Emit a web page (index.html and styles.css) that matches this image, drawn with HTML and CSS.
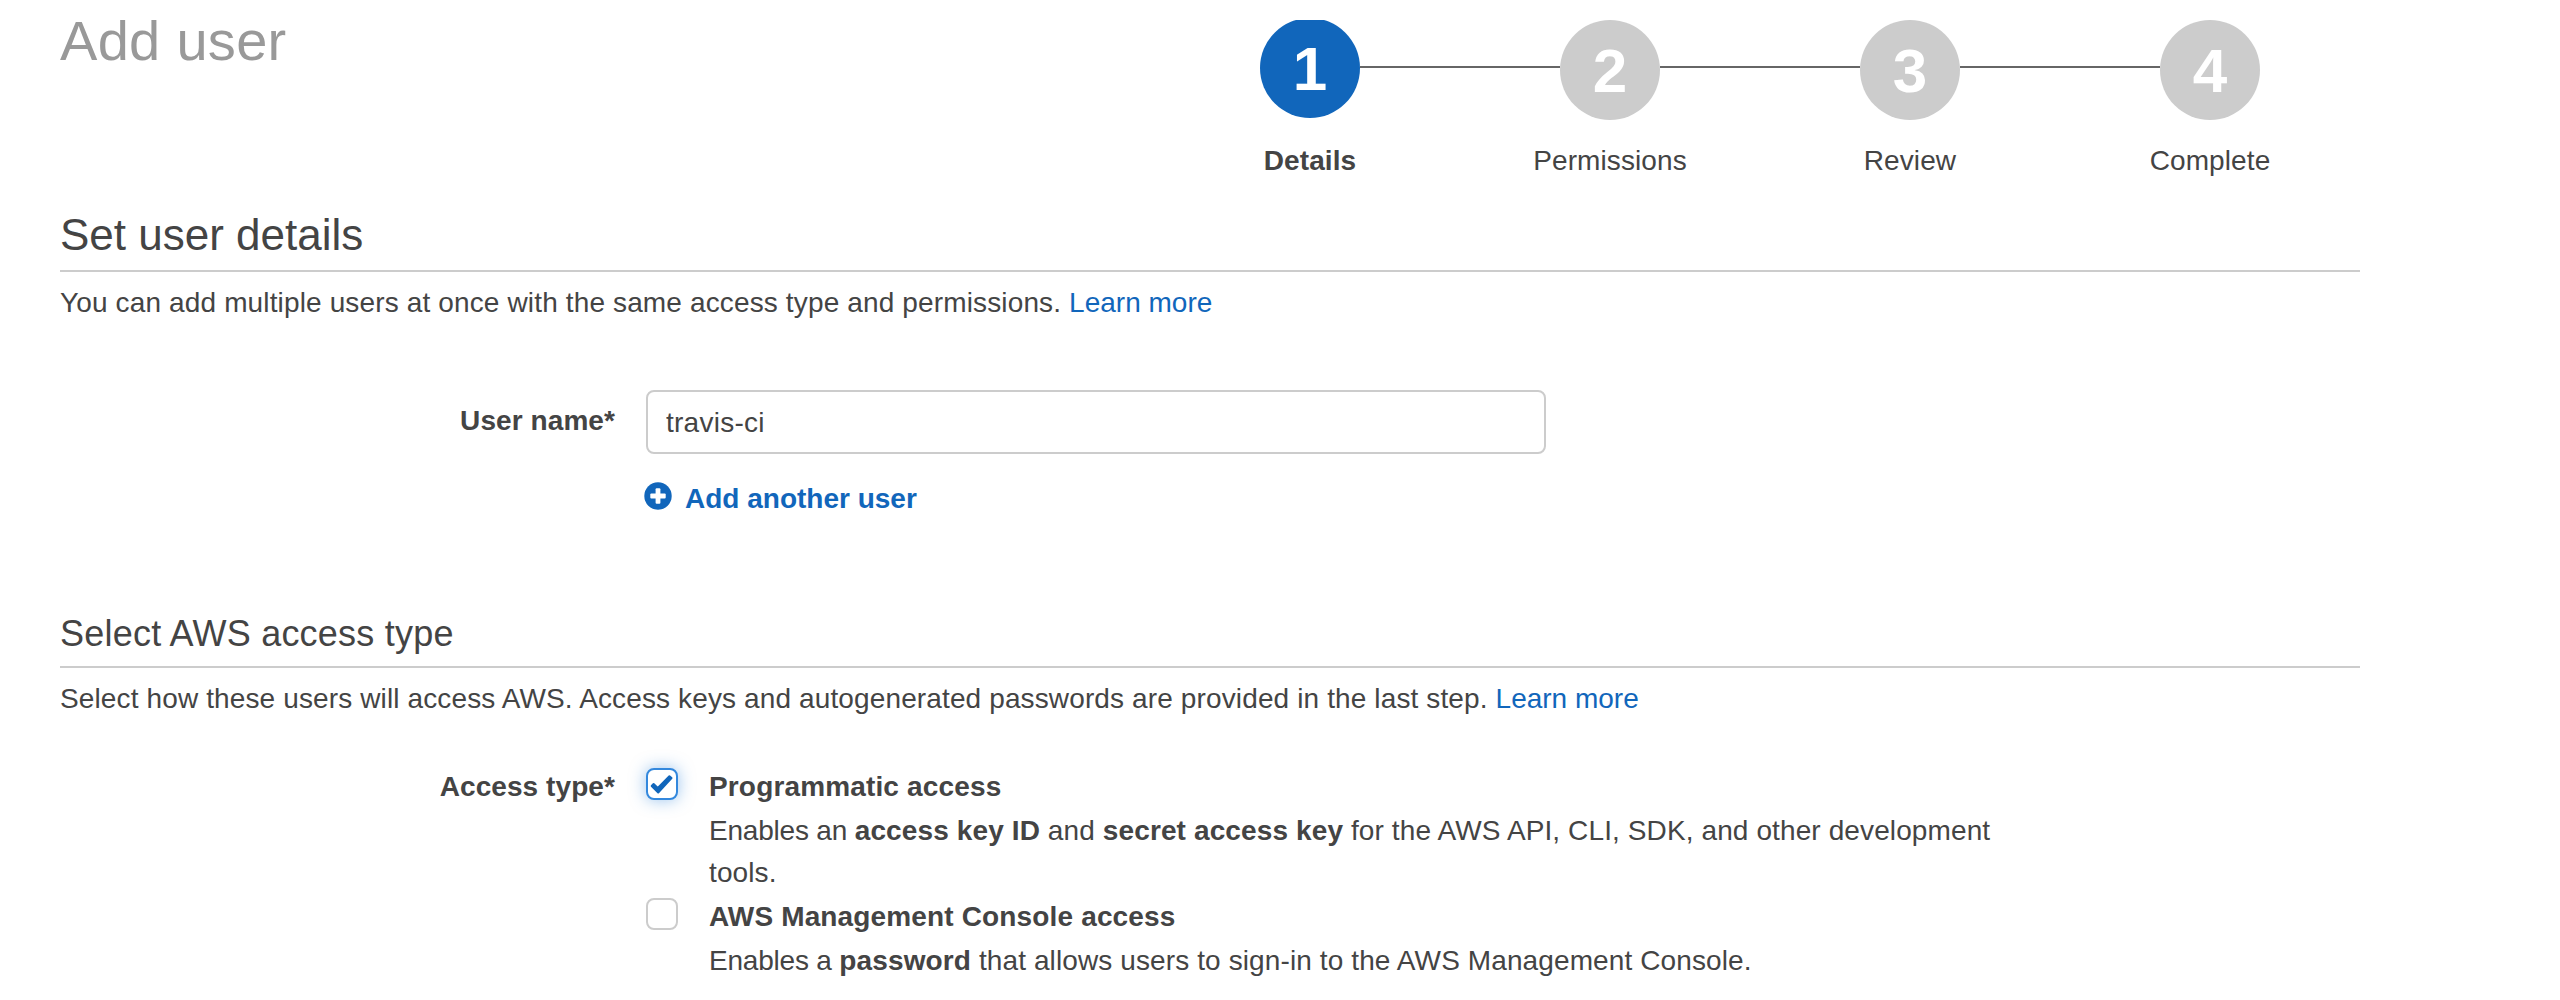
FILE: index.html
```html
<!DOCTYPE html>
<html lang="en">
<head>
<meta charset="utf-8">
<title>Add user</title>
<link rel="stylesheet" href="styles.css">
</head>
<body>
<main class="wizard">
  <header class="wizard-header">
    <h1 class="page-title">Add user</h1>
    <ol class="steps">
      <li class="step step-active"><div class="step-marker"><span class="step-number">1</span></div><span class="step-label">Details</span></li>
      <li class="step"><div class="step-marker"><span class="step-number">2</span></div><span class="step-label">Permissions</span></li>
      <li class="step"><div class="step-marker"><span class="step-number">3</span></div><span class="step-label">Review</span></li>
      <li class="step"><div class="step-marker"><span class="step-number">4</span></div><span class="step-label">Complete</span></li>
    </ol>
  </header>
  <section class="section section-details">
    <h2 class="section-title title-large">Set user details</h2>
    <p class="section-intro">You can add multiple users at once with the same access type and permissions. <a class="link" href="#">Learn more</a></p>
    <div class="field">
      <label class="field-label" for="user-name">User name*</label>
      <div class="field-control">
        <input class="text-input" id="user-name" type="text" value="travis-ci">
        <a class="add-link" href="#">
          <svg class="add-icon" viewBox="0 0 28 28"><circle cx="14" cy="14" r="13.7" fill="#1166bb"/><rect x="6.3" y="11.6" width="15.4" height="4.8" rx="1" fill="#fff"/><rect x="11.6" y="6.3" width="4.8" height="15.4" rx="1" fill="#fff"/></svg>
          <span>Add another user</span>
        </a>
      </div>
    </div>
  </section>
  <section class="section section-access">
    <h2 class="section-title title-small">Select AWS access type</h2>
    <p class="section-intro">Select how these users will access AWS. Access keys and autogenerated passwords are provided in the last step. <a class="link" href="#">Learn more</a></p>
    <div class="field">
      <span class="field-label">Access type*</span>
      <div class="options">
        <div class="option">
          <span class="checkbox checkbox-checked"><svg class="check-icon" viewBox="0 0 24 20"><path d="M1.7 12L3.6 10L7.8 14L19.4 2.2L21.5 4L8.2 18.5Z" fill="#1166bb" stroke="#1166bb" stroke-width="2" stroke-linejoin="round"/></svg></span>
          <div class="option-text">
            <strong class="option-title">Programmatic access</strong>
            <p class="option-desc"><span class="lead">Enables an </span><b>access key ID</b> and <b>secret access key</b> for the AWS API, CLI, SDK, and other development tools.</p>
          </div>
        </div>
        <div class="option">
          <span class="checkbox"></span>
          <div class="option-text">
            <strong class="option-title">AWS Management Console access</strong>
            <p class="option-desc"><span class="lead">Enables a </span><b>password</b> that allows users to sign-in to the AWS Management Console.</p>
          </div>
        </div>
      </div>
    </div>
  </section>
</main>
</body>
</html>
```
FILE: styles.css
```css
* { box-sizing: border-box; }

body {
  margin: 0;
  background: #fff;
  color: #444;
  font: 28px/42px "Liberation Sans", Arial, sans-serif;
}

.wizard {
  width: 2360px;
  height: 1000px;
  padding: 20px 0 0 60px;
  overflow: hidden;
}

h1, h2, p, ol { margin: 0; padding: 0; font-weight: normal; }

.wizard-header {
  display: flex;
  justify-content: space-between;
  height: 180px;
}

.page-title {
  font-size: 56px;
  line-height: 42px;
  letter-spacing: .3px;
  color: #999;
}

.steps {
  display: flex;
  overflow: hidden;
  list-style: none;
}

.step {
  width: 300px;
  text-align: center;
}

.step-marker {
  display: flex;
  height: 120px;
}

.step-marker::before,
.step-marker::after {
  content: "";
  flex: 1;
  height: 2px;
  margin-top: 46px;
  background: #666;
}

.step:first-child .step-marker::before,
.step:last-child .step-marker::after { visibility: hidden; }

.step-number {
  width: 100px;
  height: 100px;
  border-radius: 50%;
  background: #ccc;
  color: #fff;
  font-size: 62px;
  font-weight: bold;
  line-height: 101px;
}

.step-active .step-number {
  margin-top: -2px;
  background: #1166bb;
}

.step-label { display: block; letter-spacing: .1px; }
.step-active .step-label { font-weight: bold; }

.section-title {
  width: 2300px;
  border-bottom: 2px solid #ccc;
}

.title-large {
  height: 72px;
  font-size: 44px;
  line-height: 70px;
}

.title-small {
  height: 66px;
  font-size: 36px;
  line-height: 64px;
  letter-spacing: .22px;
}

.section-intro {
  padding-top: 10px;
  letter-spacing: .14px;
}

.section-access .section-intro { letter-spacing: .127px; }

.link {
  color: #1166bb;
  letter-spacing: 0;
  text-decoration: none;
}

.field { display: flex; }

.field-label {
  width: 555px;
  margin-right: 31px;
  text-align: right;
  font-weight: bold;
  letter-spacing: .08px;
}

.section-details { height: 402px; }
.section-details .field { padding-top: 66px; }
.section-details .field-label { padding-top: 10px; }

.text-input {
  display: block;
  width: 900px;
  height: 64px;
  padding: 2px 18px 0;
  border: 2px solid #ccc;
  border-radius: 8px;
  background: #fff;
  color: #444;
  font: inherit;
  letter-spacing: .25px;
  outline: none;
}

.add-link {
  display: flex;
  align-items: center;
  gap: 13px;
  margin: 24px 0 0 -2px;
  color: #1166bb;
  font-weight: bold;
  text-decoration: none;
}

.add-icon { width: 28px; height: 28px; margin-top: -6px; }

.section-access .field { padding-top: 46px; }

.option {
  display: flex;
  gap: 31px;
  height: 130px;
}

.checkbox {
  display: flex;
  flex: none;
  align-items: center;
  justify-content: center;
  width: 32px;
  height: 32px;
  margin-top: 2px;
  border: 2px solid #ccc;
  border-radius: 8px;
  background: #fff;
}

.checkbox-checked {
  border-color: #3388dd;
  box-shadow: 0 0 16px rgba(51, 136, 221, .5);
}

.check-icon { flex: none; width: 24px; height: 20px; }

.option-text { width: 1300px; }
.option-title { display: block; height: 44px; letter-spacing: .15px; }
.option-desc { letter-spacing: .11px; }
.option-desc b { letter-spacing: .12px; }
.option-desc .lead { letter-spacing: -.2px; }
```
